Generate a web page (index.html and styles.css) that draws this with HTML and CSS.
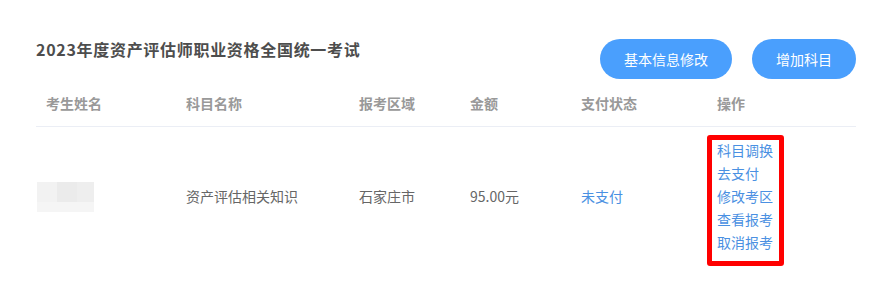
FILE: index.html
```html
<!DOCTYPE html>
<html lang="zh-CN">
<head>
    <meta charset="UTF-8">
    <title>报考信息</title>
    <link rel="stylesheet" href="styles.css">
</head>
<body>
    <div class="panel">
        <div class="panel-head">
            <div class="title">2023年度资产评估师职业资格全国统一考试</div>
            <div class="actions">
                <button class="btn">基本信息修改</button>
                <button class="btn">增加科目</button>
            </div>
        </div>
        <table class="exam-table">
            <colgroup>
                <col style="width: 140px">
                <col style="width: 173px">
                <col style="width: 111px">
                <col style="width: 111px">
                <col style="width: 136px">
                <col style="width: 149px">
            </colgroup>
            <thead>
                <tr>
                    <th>考生姓名</th>
                    <th>科目名称</th>
                    <th>报考区域</th>
                    <th>金额</th>
                    <th>支付状态</th>
                    <th>操作</th>
                </tr>
            </thead>
            <tbody>
                <tr>
                    <td class="name-cell">
                        <div class="blur">
                            <div class="blur-top"><span class="b1"></span><span class="b2"></span><span class="b3"></span></div>
                            <div class="blur-bottom"></div>
                        </div>
                    </td>
                    <td>资产评估相关知识</td>
                    <td>石家庄市</td>
                    <td>95.00元</td>
                    <td><a class="link" href="#">未支付</a></td>
                    <td class="ops-cell">
                        <div class="ops">
                            <a class="link" href="#">科目调换</a>
                            <a class="link" href="#">去支付</a>
                            <a class="link" href="#">修改考区</a>
                            <a class="link" href="#">查看报考</a>
                            <a class="link" href="#">取消报考</a>
                        </div>
                    </td>
                </tr>
            </tbody>
        </table>
    </div>
</body>
</html>
```

FILE: styles.css
```css
body {
    margin: 0;
    background: #fff;
    font-family: "Noto Sans CJK SC", "Noto Sans", sans-serif;
}

.panel {
    padding: 39px 36px 0;
}

.panel-head {
    display: flex;
    justify-content: space-between;
    align-items: flex-start;
}

.title {
    font-size: 16px;
    line-height: 20px;
    font-weight: bold;
    letter-spacing: 0.7px;
    color: #4d4d4d;
}

.actions {
    display: flex;
    gap: 20px;
}

.btn {
    height: 40px;
    padding: 0 24px;
    border: none;
    border-radius: 20px;
    background-color: #4a9ffd;
    color: #fff;
    font-family: inherit;
    font-size: 14px;
    cursor: pointer;
}

.exam-table {
    width: 820px;
    table-layout: fixed;
    border-collapse: collapse;
}

.exam-table th {
    padding: 14px 10px 13px;
    text-align: left;
    font-size: 14px;
    line-height: 20px;
    font-weight: bold;
    color: #999;
    border-bottom: 1px solid #ebeef5;
}

.exam-table td {
    padding: 8px 10px 18px;
    font-size: 14px;
    line-height: 20px;
    color: #666;
    vertical-align: middle;
}

.exam-table td.name-cell {
    padding: 8px 10px 15px 1px;
}

.blur {
    width: 57px;
}

.blur-top {
    display: flex;
    height: 20px;
}

.blur-top span {
    display: block;
}

.b1 { width: 20px; background: #f2f2f2; }
.b2 { width: 20px; background: #ebebeb; }
.b3 { width: 17px; background: #eeeeee; }

.blur-bottom {
    height: 10px;
    background: #f5f5f5;
}

.link {
    color: #4a90e2;
    text-decoration: none;
}

.exam-table td.ops-cell {
    padding: 8px 0;
}

.ops {
    display: inline-flex;
    flex-direction: column;
    border: 5px solid #ff0000;
    border-radius: 3px;
    padding: 0 6px 6px 5px;
    line-height: 23px;
}

.ops .link {
    margin-top: -1px;
    margin-bottom: 1px;
}
```
